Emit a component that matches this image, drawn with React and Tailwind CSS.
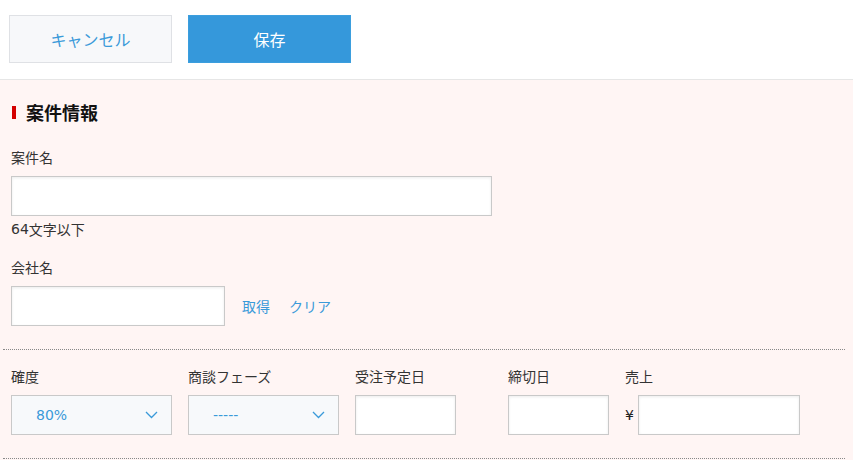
import React from 'react'

const font = { fontFamily: '"Noto Sans CJK JP", "Noto Sans", sans-serif' }

const Chevron = () => (
  <svg width="13" height="8" viewBox="0 0 13 8" fill="none" className="shrink-0">
    <polyline points="1,1 6.5,6.5 12,1" stroke="#3a9ad9" strokeWidth="1.3" />
  </svg>
)

const Input = ({ className = '' }) => (
  <div className={`h-10 bg-white border border-[#c9c9c9] shadow-[inset_0_1px_3px_rgba(0,0,0,0.08)] ${className}`} />
)

const Select = ({ value, className = '' }) => (
  <div className={`h-10 flex items-center justify-between pl-[24px] pr-[13px] bg-[#f7f9fb] border border-[#c9c9c9] text-[14px] text-[#3a9ad9] ${className}`}>
    <span className="font-['DejaVu_Sans','Noto_Sans_CJK_JP',sans-serif]">{value}</span>
    <Chevron />
  </div>
)

const Label = ({ children }) => (
  <div className="text-[14px] leading-5 text-[#333]">{children}</div>
)

const App = () => {
  return (
    <div className="w-[853px] h-[460px] overflow-hidden bg-[#fff5f4]" style={font}>
      {/* toolbar */}
      <div className="h-[80px] bg-white border-b border-[#e6e6e6] flex items-start gap-4 pl-[9px] pt-[15px]">
        <button className="w-[163px] h-[48px] bg-[#f7f8fa] border border-[#dfe1e5] text-[16px] text-[#3a9ad9]">
          キャンセル
        </button>
        <button className="w-[163px] h-[48px] bg-[#3598db] border border-[#3b9ede] text-[16px] text-white">
          保存
        </button>
      </div>

      {/* form */}
      <div className="pt-[20px]">
        <div className="pl-[11px]">
          <div className="flex items-center h-6">
            <span className="w-[4px] h-[13px] bg-[#d40000] ml-[1px] mr-[10px]" />
            <span className="text-[18px] leading-6 font-bold text-[#111]">案件情報</span>
          </div>

          <div className="mt-[23px]">
            <Label>案件名</Label>
            <Input className="mt-[9px] w-[481px]" />
            <div className="mt-[4px] h-[18px] flex items-center text-[14px] text-[#333]">
              <span className="font-['DejaVu_Sans',sans-serif]">64</span>
              <span>文字以下</span>
            </div>
          </div>

          <div className="mt-[19px]">
            <Label>会社名</Label>
            <div className="mt-[9px] flex items-center">
              <Input className="w-[214px]" />
              <span className="ml-[17px] text-[14px] text-[#3a9ad9]">取得</span>
              <span className="ml-[19px] text-[14px] text-[#3a9ad9]">クリア</span>
            </div>
          </div>
        </div>

        <div className="mt-[23px] ml-[3px] mr-[8px] border-t border-dotted border-[#888]" />

        <div className="pl-[11px] mt-[16px] flex gap-4">
          <div className="w-[161px]">
            <Label>確度</Label>
            <Select value="80%" className="mt-[9px]" />
          </div>
          <div className="w-[151px]">
            <Label>商談フェーズ</Label>
            <Select value="-----" className="mt-[9px]" />
          </div>
          <div className="w-[137px]">
            <Label>受注予定日</Label>
            <Input className="mt-[9px] w-[101px]" />
          </div>
          <div className="w-[101px]">
            <Label>締切日</Label>
            <Input className="mt-[9px] w-[101px]" />
          </div>
          <div>
            <Label>売上</Label>
            <div className="mt-[9px] flex items-center">
              <span className="text-[14px] text-[#222] w-[13px] font-['DejaVu_Sans',sans-serif]">¥</span>
              <Input className="w-[162px]" />
            </div>
          </div>
        </div>

        <div className="mt-[23px] ml-[3px] mr-[8px] border-t border-dotted border-[#888]" />
      </div>
    </div>
  )
}

export default App
